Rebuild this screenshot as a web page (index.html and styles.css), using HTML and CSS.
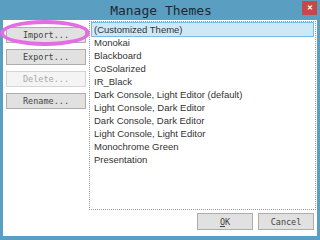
FILE: index.html
```html
<!DOCTYPE html>
<html lang="en">
<head>
  <meta charset="UTF-8">
  <title>Manage Themes</title>
  <link rel="stylesheet" href="styles.css">
</head>
<body>
  <div class="window">
    <div class="titlebar">
      <span class="title">Manage Themes</span>
      <span class="close">&#x2715;</span>
    </div>
    <div class="client">
      <div class="side">
        <button class="btn">Import...</button>
        <button class="btn">Export...</button>
        <button class="btn" disabled>Delete...</button>
        <button class="btn">Rename...</button>
      </div>
      <ul class="themes">
        <li class="selected">(Customized Theme)</li>
        <li>Monokai</li>
        <li>Blackboard</li>
        <li>CoSolarized</li>
        <li>IR_Black</li>
        <li>Dark Console, Light Editor (default)</li>
        <li>Light Console, Dark Editor</li>
        <li>Dark Console, Dark Editor</li>
        <li>Light Console, Light Editor</li>
        <li>Monochrome Green</li>
        <li>Presentation</li>
      </ul>
      <div class="actions">
        <button class="btn wide"><u>O</u>K</button>
        <button class="btn wide">Cancel</button>
      </div>
    </div>
    <div class="highlight"></div>
  </div>
</body>
</html>
```

FILE: styles.css
```css
body {
  margin: 0;
  padding: 0;
  font-family: "Liberation Sans", Arial, sans-serif;
}
.window {
  position: relative;
  width: 320px;
  height: 240px;
  box-sizing: border-box;
  background-color: #5a9ec2;
  padding: 0 3px 4px 3px;
  display: flex;
  flex-direction: column;
}
.titlebar {
  height: 20px;
  display: flex;
  justify-content: center;
  align-items: center;
  position: relative;
}
.title {
  font-family: "DejaVu Sans Mono", monospace;
  font-size: 13px;
  color: #1c2a36;
  margin-left: 2px;
}
.close {
  position: absolute;
  right: 0;
  top: 1px;
  width: 15px;
  height: 14px;
  background-color: #c74848;
  color: #fff;
  font-size: 7px;
  font-weight: bold;
  display: flex;
  justify-content: center;
  align-items: center;
}
.client {
  flex: 1;
  background-color: #fff;
  display: grid;
  grid-template-columns: 80px 1fr;
  grid-template-rows: 1fr 17px;
  column-gap: 3px;
  row-gap: 3px;
  padding: 1px 1px 6px 3px;
}
.side {
  display: flex;
  flex-direction: column;
  gap: 6px;
  padding-top: 6px;
}
.btn {
  height: 16px;
  padding: 0;
  background-color: #e1e1e1;
  border: 1px solid #adadad;
  color: #444;
  font-family: "DejaVu Sans Mono", monospace;
  font-size: 8.5px;
  line-height: 14px;
}
.btn:disabled {
  background-color: #f4f4f4;
  border-color: #d5d5d5;
  color: #a8a8a8;
}
.themes {
  list-style: none;
  margin: 0;
  padding: 0 1px 1px 1px;
  border: 1px dotted #9a9a9a;
  font-size: 9.5px;
  color: #333;
}
.themes li {
  height: 13px;
  line-height: 13px;
  padding-left: 2px;
  border: 1px solid transparent;
  margin-bottom: -2px;
}
.themes li.selected {
  background-color: #cde8f7;
  border-color: #74bce8;
}
.actions {
  grid-column: 2;
  display: flex;
  justify-content: flex-end;
  gap: 5px;
  padding-right: 2px;
}
.wide {
  width: 56px;
  height: 17px;
}
.highlight {
  position: absolute;
  left: 0;
  top: 20px;
  width: 82px;
  height: 18px;
  border: 4px solid #e46ce4;
  border-radius: 50%;
}
```
